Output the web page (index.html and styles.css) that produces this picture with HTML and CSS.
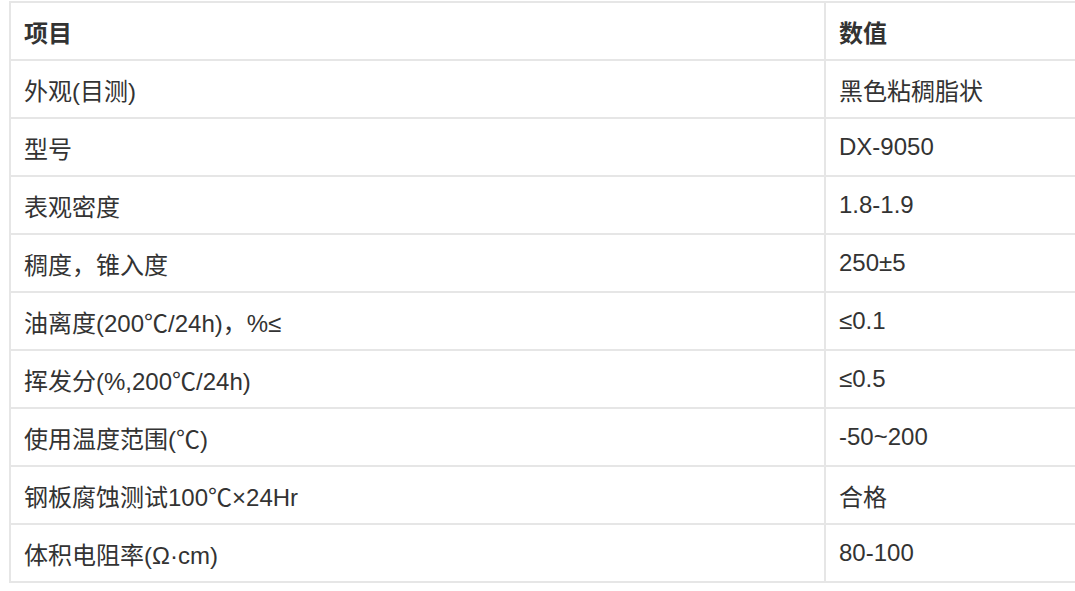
FILE: index.html
```html
<!DOCTYPE html>
<html lang="zh-CN">
<head>
<meta charset="utf-8">
<link rel="stylesheet" href="styles.css">
</head>
<body>
<div class="wrap">
<table class="spec">
<colgroup><col class="c1"><col class="c2"></colgroup>
<thead>
<tr><th>项目</th><th>数值</th></tr>
</thead>
<tbody>
<tr><td>外观(目测)</td><td>黑色粘稠脂状</td></tr>
<tr><td>型号</td><td>DX-9050</td></tr>
<tr><td>表观密度</td><td>1.8-1.9</td></tr>
<tr><td>稠度，锥入度</td><td>250±5</td></tr>
<tr><td>油离度(200℃/24h)，%≤</td><td>≤0.1</td></tr>
<tr><td>挥发分(%,200℃/24h)</td><td>≤0.5</td></tr>
<tr><td>使用温度范围(℃)</td><td>-50~200</td></tr>
<tr><td>钢板腐蚀测试100℃×24Hr</td><td>合格</td></tr>
<tr><td>体积电阻率(Ω·cm)</td><td>80-100</td></tr>
</tbody>
</table>
</div>
</body>
</html>
```
FILE: styles.css
```css
html, body {
  margin: 0;
  padding: 0;
  overflow: hidden;
  background: #fff;
}
.wrap {
  padding: 1px 0 0 9px;
}
.spec {
  border-collapse: collapse;
  width: 1300px;
  table-layout: fixed;
  font-family: "Liberation Sans", "Noto Sans CJK SC", sans-serif;
  font-size: 24px;
  color: #333;
}
.c1 { width: 815px; }
.spec th, .spec td {
  border: 2px solid #e6e6e6;
  height: 56px;
  padding: 0 13px;
  text-align: left;
  vertical-align: middle;
  font-weight: normal;
}
.spec th {
  font-weight: bold;
}
```
